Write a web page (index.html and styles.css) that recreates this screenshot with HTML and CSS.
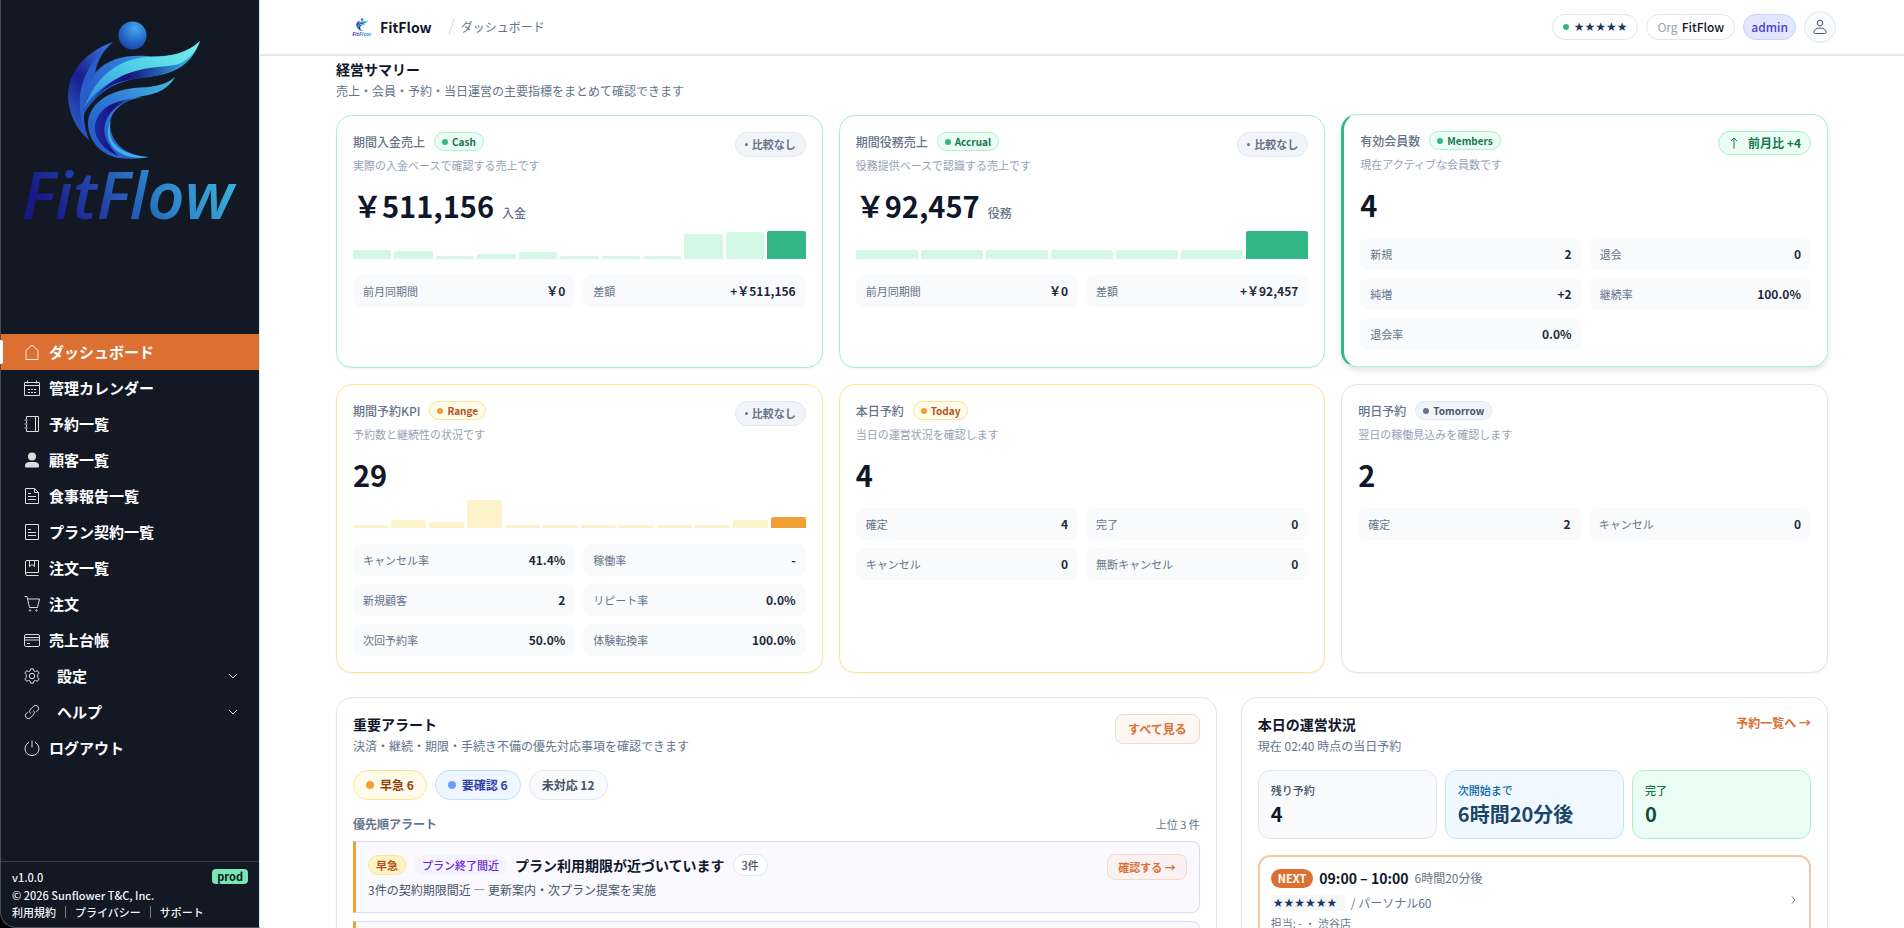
FILE: index.html
```html
<!DOCTYPE html>
<html lang="ja">
<head>
    <meta charset="UTF-8">
    <title>FitFlow | ダッシュボード</title>
    <link rel="stylesheet" href="styles.css">
</head>
<body>
<!-- 共通ロゴ -->
<svg class="defs" width="0" height="0" aria-hidden="true">
    <defs>
        <radialGradient id="g-head" cx="0.6" cy="0.25" r="0.8">
            <stop offset="0" stop-color="#45a8ea"/><stop offset="0.6" stop-color="#2468c8"/><stop offset="1" stop-color="#1c3fa8"/>
        </radialGradient>
        <linearGradient id="g-back" x1="0.8" y1="0" x2="0.3" y2="1">
            <stop offset="0" stop-color="#3478d8"/><stop offset="0.5" stop-color="#1a1c8c"/><stop offset="1" stop-color="#2a62c8"/>
        </linearGradient>
        <linearGradient id="g-mid" x1="0" y1="1" x2="1" y2="0">
            <stop offset="0" stop-color="#2450c0"/><stop offset="0.5" stop-color="#2f7ad6"/><stop offset="1" stop-color="#40c0e4"/>
        </linearGradient>
        <linearGradient id="g-light" x1="0" y1="1" x2="1" y2="0">
            <stop offset="0" stop-color="#2c88dc"/><stop offset="0.55" stop-color="#4fd2e6"/><stop offset="1" stop-color="#7cf0e8"/>
        </linearGradient>
        <linearGradient id="g-dark" x1="0" y1="0" x2="1" y2="0">
            <stop offset="0" stop-color="#1c2aa0"/><stop offset="0.4" stop-color="#16127c"/><stop offset="1" stop-color="#2f9ad8"/>
        </linearGradient>
        <linearGradient id="g-word" x1="0" y1="0.3" x2="1" y2="0">
            <stop offset="0" stop-color="#171a86"/><stop offset="0.25" stop-color="#2340a8"/><stop offset="0.55" stop-color="#2b86cc"/><stop offset="1" stop-color="#3fc0dc"/>
        </linearGradient>
    </defs>
    <symbol id="logo" viewBox="20 18 222 206" overflow="visible">
        <circle cx="132.500" cy="35.500" r="14" fill="url(#g-head)"/>
        <path fill="url(#g-back)" d="M113 42C82 53 67 75 68 98c1 17 9 32 21 42-5-13-6-27-5-38 2-11 6-20 11-29 2-12 8-23 18-31z"/>
        <path fill="#2a5ccc" d="M113 42C94 56 82 76 80 96c-1 12 1 26 4 34-1-20 3-40 11-57 2-12 8-23 18-31z"/>
        <path fill="url(#g-mid)" d="M95 73c14-15 30-18 52-17 22 1 39-2 53-15-7 20-20 30-40 34-26 4-55 4-76 39 1-15 5-30 11-41z"/>
        <path fill="url(#g-light)" d="M200 41c-13 13-32 16-53 16-24 2-49 14-63 51 12-20 32-32 60-36 24-3 46-6 56-31z"/>
        <path fill="url(#g-dark)" d="M92 102c16-24 38-31 58-34 15-2 25-2 32-5-8 9-22 13-39 15-24 2-38 8-51 24z"/>
        <path fill="url(#g-mid)" d="M175 77c-10 9-24 10-41 11-25 3-43 14-46 33-1 20 14 34 30 37 11 1 22 1 31-1-23-1-38-14-39-32 0-14 13-25 33-29 15-2 26-8 32-19z"/>
        <path fill="url(#g-dark)" d="M143 97c-28 3-44 9-48 28-2 13 10 26 24 31-14-12-17-25-13-35 4-12 16-20 37-24z"/>
        <path fill="#3fb0e6" d="M111 121c-6 20 8 34 38 36-22 4-42-7-41-25 0-4 1-8 3-11z"/>
        <text x="22" y="219" class="logo-word" fill="url(#g-word)">FitFlow</text>
    </symbol>
</svg>

<div class="app">
    <aside class="sidebar">
        <a class="sidebar-logo" href="#" aria-label="FitFlow"><svg viewBox="0 0 222 206"><use href="#logo" width="222" height="206"/></svg></a>
        <nav class="nav">
            <a class="nav-item active" href="#">
                <svg viewBox="0 0 16 16"><path d="M2 6.500 8 1l6 5.500v9H2z"/></svg>ダッシュボード</a>
            <a class="nav-item" href="#">
                <svg viewBox="0 0 16 16"><path d="M.5 2.500h15v13H.5zM.5 5.500h15M3.500.5v3M12.500.5v3"/><path d="M4 9.500h2M7 9.500h2M10 9.500h2M4 12.500h2M7 12.500h2M10 12.500h2"/></svg>管理カレンダー</a>
            <a class="nav-item" href="#">
                <svg viewBox="0 0 16 16"><path d="M2.500 3V.5h12v15h-12V13M11.500.5v15M2.500 5v2M2.500 9v2M.5 4h3M.5 8h3M.5 12h3"/></svg>予約一覧</a>
            <a class="nav-item" href="#">
                <svg viewBox="0 0 16 16"><g class="solid"><circle cx="8" cy="4.500" r="4"/><path d="M1 14c0-3 2-4 5-4h4c3 0 5 1 5 4 0 1-.5 1.500-1.500 1.500h-11C1.500 15.500 1 15 1 14z"/></g></svg>顧客一覧</a>
            <a class="nav-item" href="#">
                <svg viewBox="0 0 16 16"><path d="M1.500.5h9l4 4v11h-13zM10.500.5v4h4M4 5.500h3M4 8.500h8M4 11.500h8"/></svg>食事報告一覧</a>
            <a class="nav-item" href="#">
                <svg viewBox="0 0 16 16"><path d="M1.500.5h13v15h-13zM4 5.500h3M4 8.500h8M4 11.500h8"/></svg>プラン契約一覧</a>
            <a class="nav-item" href="#">
                <svg viewBox="0 0 16 16"><path d="M14.500 12.500v-12H3a1.500 1.500 0 0 0-1.500 1.500v12A1.500 1.500 0 0 0 3 15.500h11.500M14.500 12.500H3a1.500 1.500 0 0 0-1.500 1.500M5.500.5v6L8 4.500l2.500 2v-6"/></svg>注文一覧</a>
            <a class="nav-item" href="#">
                <svg viewBox="0 0 16 16"><path d="M.5.5h2.500l2.500 11h8l2-8.500H3.500"/><circle cx="6" cy="14.500" r=".7"/><circle cx="12.500" cy="14.500" r=".7"/></svg>注文</a>
            <a class="nav-item" href="#">
                <svg viewBox="0 0 16 16"><rect x=".5" y="2.500" width="15" height="12" rx="1.500"/><path d="M.5 5.500h15M.5 8h15M3 11.500h3"/></svg>売上台帳</a>
            <button class="nav-item" type="button">
                <svg viewBox="0 0 16 16"><circle cx="8" cy="8" r="2.700"/><path d="M6.600.8h2.800l.5 2 1.500.8 2-.9 1.700 2.400-1.400 1.600v2.600l1.400 1.600-1.700 2.400-2-.9-1.500.8-.5 2H6.600l-.5-2-1.500-.8-2 .9L.9 10.900l1.400-1.600V6.700L.9 5.100l1.700-2.400 2 .9 1.500-.8z"/></svg><span class="nav-group">設定</span>
                <svg class="chev" viewBox="0 0 12 12"><path d="M2 4l4 4 4-4"/></svg></button>
            <button class="nav-item" type="button">
                <svg viewBox="0 0 16 16"><path d="M6.500 9.500a3 3 0 0 1 0-4.200l3.300-3.300a3 3 0 0 1 4.200 4.200l-2 2M9.500 6.500a3 3 0 0 1 0 4.200l-3.300 3.300A3 3 0 0 1 2 9.800l2-2"/></svg><span class="nav-group">ヘルプ</span>
                <svg class="chev" viewBox="0 0 12 12"><path d="M2 4l4 4 4-4"/></svg></button>
            <a class="nav-item" href="#">
                <svg viewBox="0 0 16 16"><path d="M8 .5v7M5 2.300a7 7 0 1 0 6 0"/></svg>ログアウト</a>
        </nav>
        <footer class="sidebar-foot">
            <div class="version">v1.0.0<span class="env">prod</span></div>
            <div>© 2026 Sunflower T&amp;C, Inc.</div>
            <div class="links"><a href="#">利用規約</a><i></i><a href="#">プライバシー</a><i></i><a href="#">サポート</a></div>
        </footer>
    </aside>

    <main class="main">
        <header class="topbar">
            <div class="topbar-inner">
                <a class="brand" href="#"><svg viewBox="0 0 222 206"><use href="#logo" width="222" height="206"/></svg>FitFlow</a>
                <svg class="slash" viewBox="0 0 8 18"><path d="M7 1 2 17"/></svg>
                <span class="crumb">ダッシュボード</span>
                <div class="user">
                    <span class="chip"><span class="dot green"></span><span class="mask">★★★★★</span></span>
                    <span class="chip"><span class="muted">Org</span> <b>FitFlow</b></span>
                    <span class="chip role">admin</span>
                    <button class="avatar" type="button" aria-label="アカウント"><svg viewBox="0 0 16 16"><circle cx="8" cy="4" r="2.800"/><path d="M3.500 14.500c-1.300 0-2-.8-1.500-2.200C2.700 10.300 4.800 9 8 9s5.300 1.300 6 3.300c.5 1.400-.2 2.200-1.500 2.200z"/></svg></button>
                </div>
            </div>
        </header>

        <div class="content">
            <section>
                <h2>経営サマリー</h2>
                <p class="lead">売上・会員・予約・当日運営の主要指標をまとめて確認できます</p>

                <div class="kpis">
                    <article class="card c-green">
                        <div class="card-head">
                            <h3>期間入金売上</h3><span class="badge green"><span class="dot green"></span>Cash</span>
                            <span class="pill"><i></i>比較なし</span>
                        </div>
                        <p class="note">実際の入金ベースで確認する売上です</p>
                        <div class="value">￥511,156<small>入金</small></div>
                        <div class="bars green">
                            <span style="height:9px"></span><span style="height:8px"></span><span style="height:3px"></span><span style="height:5px"></span><span style="height:7px"></span><span style="height:3px"></span><span style="height:3px"></span><span style="height:3px"></span><span style="height:25px"></span><span style="height:27px"></span><span style="height:28px"></span>
                        </div>
                        <dl class="stats">
                            <div><dt>前月同期間</dt><dd>￥0</dd></div>
                            <div><dt>差額</dt><dd>+￥511,156</dd></div>
                        </dl>
                    </article>

                    <article class="card c-green">
                        <div class="card-head">
                            <h3>期間役務売上</h3><span class="badge green"><span class="dot green"></span>Accrual</span>
                            <span class="pill"><i></i>比較なし</span>
                        </div>
                        <p class="note">役務提供ベースで認識する売上です</p>
                        <div class="value">￥92,457<small>役務</small></div>
                        <div class="bars green">
                            <span style="height:9px"></span><span style="height:9px"></span><span style="height:9px"></span><span style="height:9px"></span><span style="height:9px"></span><span style="height:9px"></span><span style="height:28px"></span>
                        </div>
                        <dl class="stats">
                            <div><dt>前月同期間</dt><dd>￥0</dd></div>
                            <div><dt>差額</dt><dd>+￥92,457</dd></div>
                        </dl>
                    </article>

                    <article class="card c-green raised">
                        <div class="card-head">
                            <h3>有効会員数</h3><span class="badge green"><span class="dot green"></span>Members</span>
                            <span class="pill up"><svg viewBox="0 0 12 12"><path d="M6 11.500V1M3 4l3-3 3 3"/></svg>前月比 +4</span>
                        </div>
                        <p class="note">現在アクティブな会員数です</p>
                        <div class="value">4</div>
                        <dl class="stats">
                            <div><dt>新規</dt><dd>2</dd></div>
                            <div><dt>退会</dt><dd>0</dd></div>
                            <div><dt>純増</dt><dd>+2</dd></div>
                            <div><dt>継続率</dt><dd>100.0%</dd></div>
                            <div><dt>退会率</dt><dd>0.0%</dd></div>
                        </dl>
                    </article>

                    <article class="card c-amber">
                        <div class="card-head">
                            <h3>期間予約KPI</h3><span class="badge amber"><span class="dot amber"></span>Range</span>
                            <span class="pill"><i></i>比較なし</span>
                        </div>
                        <p class="note">予約数と継続性の状況です</p>
                        <div class="value">29</div>
                        <div class="bars amber">
                            <span style="height:3px"></span><span style="height:8px"></span><span style="height:6px"></span><span style="height:28px"></span><span style="height:3px"></span><span style="height:3px"></span><span style="height:3px"></span><span style="height:3px"></span><span style="height:3px"></span><span style="height:3px"></span><span style="height:8px"></span><span style="height:11px"></span>
                        </div>
                        <dl class="stats">
                            <div><dt>キャンセル率</dt><dd>41.4%</dd></div>
                            <div><dt>稼働率</dt><dd>-</dd></div>
                            <div><dt>新規顧客</dt><dd>2</dd></div>
                            <div><dt>リピート率</dt><dd>0.0%</dd></div>
                            <div><dt>次回予約率</dt><dd>50.0%</dd></div>
                            <div><dt>体験転換率</dt><dd>100.0%</dd></div>
                        </dl>
                    </article>

                    <article class="card c-amber">
                        <div class="card-head">
                            <h3>本日予約</h3><span class="badge amber"><span class="dot amber"></span>Today</span>
                        </div>
                        <p class="note">当日の運営状況を確認します</p>
                        <div class="value">4</div>
                        <dl class="stats">
                            <div><dt>確定</dt><dd>4</dd></div>
                            <div><dt>完了</dt><dd>0</dd></div>
                            <div><dt>キャンセル</dt><dd>0</dd></div>
                            <div><dt>無断キャンセル</dt><dd>0</dd></div>
                        </dl>
                    </article>

                    <article class="card">
                        <div class="card-head">
                            <h3>明日予約</h3><span class="badge"><span class="dot"></span>Tomorrow</span>
                        </div>
                        <p class="note">翌日の稼働見込みを確認します</p>
                        <div class="value">2</div>
                        <dl class="stats">
                            <div><dt>確定</dt><dd>2</dd></div>
                            <div><dt>キャンセル</dt><dd>0</dd></div>
                        </dl>
                    </article>
                </div>
            </section>

            <div class="panels">
                <section class="card panel">
                    <div class="panel-head">
                        <div>
                            <h2>重要アラート</h2>
                            <p class="lead">決済・継続・期限・手続き不備の優先対応事項を確認できます</p>
                        </div>
                        <button class="btn" type="button">すべて見る</button>
                    </div>
                    <div class="counts">
                        <span class="count amber"><span class="dot amber"></span>早急 6</span>
                        <span class="count blue"><span class="dot blue"></span>要確認 6</span>
                        <span class="count">未対応 12</span>
                    </div>
                    <div class="sub-head"><h3>優先順アラート</h3><span>上位 3 件</span></div>
                    <div class="alerts">
                        <div class="alert">
                            <div class="alert-body">
                                <div class="alert-title">
                                    <span class="tag amber">早急</span><span class="tag purple">プラン終了間近</span>
                                    <strong>プラン利用期限が近づいています</strong><span class="tag">3件</span>
                                </div>
                                <p>3件の契約期限間近 — 更新案内・次プラン提案を実施</p>
                            </div>
                            <button class="btn small" type="button">確認する →</button>
                        </div>
                        <div class="alert"></div>
                    </div>
                </section>

                <section class="card panel">
                    <div class="panel-head">
                        <div>
                            <h2>本日の運営状況</h2>
                            <p class="lead">現在 02:40 時点の当日予約</p>
                        </div>
                        <a class="more" href="#">予約一覧へ →</a>
                    </div>
                    <div class="tiles">
                        <div class="tile"><span>残り予約</span><b>4</b></div>
                        <div class="tile sky"><span>次開始まで</span><b>6時間20分後</b></div>
                        <div class="tile green"><span>完了</span><b>0</b></div>
                    </div>
                    <a class="next" href="#">
                        <div>
                            <div class="next-time"><span class="next-tag">NEXT</span><strong>09:00 – 10:00</strong><span>6時間20分後</span></div>
                            <div class="next-name"><span class="mask">★★★★★★</span><span>/ パーソナル60</span></div>
                            <div class="next-staff">担当: - ‧ 渋谷店</div>
                        </div>
                        <svg class="chev" viewBox="0 0 10 10"><path d="M4 1.500 7 5 4 8.500"/></svg>
                    </a>
                </section>
            </div>
        </div>
    </main>
</div>
</body>
</html>
```
FILE: styles.css
```css
*{
    box-sizing: border-box;
    margin: 0;
    padding: 0;
}
body{
    height: 100vh;
    overflow: hidden;
    background: #000;
    color: #0f172a;
    font: 12px/18px "Noto Sans CJK JP", sans-serif;
}
a{
    color: inherit;
    text-decoration: none;
}
button{
    font: inherit;
    color: inherit;
    cursor: pointer;
}
svg{
    display: block;
    fill: none;
    stroke: currentColor;
}
.defs{
    position: absolute;
}
.logo-word{
    font: italic 600 65px "Open Sans", sans-serif;
}
.app{
    display: flex;
    height: 100%;
}

/* サイドバー */
.sidebar{
    display: flex;
    flex-direction: column;
    flex: none;
    width: 260px;
    background: #121824;
    border: solid #4a505a;
    border-width: 0 1px 1px 1px;
    border-right-color: #e3e7ee;
    border-radius: 0 0 0 16px;
    color: #fff;
}
.sidebar-logo{
    height: 334px;
    padding: 18px 17px 0 19px;
}
.sidebar-logo svg, .brand svg{
    stroke: none;
    overflow: visible;
}
.nav{
    flex: 1;
}
.nav-item{
    display: flex;
    align-items: center;
    gap: 9px;
    width: 100%;
    height: 36px;
    padding: 0 20px 0 23px;
    border: 0;
    background: none;
    font-size: 15px;
    font-weight: 600;
    text-align: left;
}
.nav-item svg{
    width: 16px;
    height: 16px;
    opacity: .85;
}
.nav-item .solid{
    fill: currentColor;
    stroke: none;
}
.nav-item.active{
    position: relative;
    background: #dc7032;
}
.nav-item.active::before{
    content: "";
    position: absolute;
    left: -1px;
    top: 6px;
    width: 3px;
    height: 24px;
    background: #fff;
    border-radius: 0 2px 2px 0;
}
.nav-group{
    flex: 1;
    padding-left: 8px;
}
.nav-item .chev{
    width: 12px;
    height: 12px;
}
.sidebar-foot{
    padding: 5px 11px 7px;
    border-top: 1px solid #3a404b;
    font-size: 11px;
    font-weight: 500;
    color: #f1f3f6;
}
.version{
    display: flex;
    justify-content: space-between;
    align-items: center;
    height: 19px;
}
.env{
    padding: 0 5px;
    border-radius: 4px;
    background: #78e6b8;
    color: #0b1a14;
    line-height: 15px;
    font-weight: 600;
}
.links{
    display: flex;
    align-items: center;
    gap: 9px;
    line-height: 16px;
}
.links i{
    width: 1px;
    height: 12px;
    background: #747a84;
}

/* ヘッダー */
.main{
    flex: 1;
    min-width: 0;
    overflow: hidden;
    background: #fff;
}
.topbar{
    border-bottom: 2px solid #e3e7ee;
}
.topbar-inner{
    display: flex;
    align-items: center;
    max-width: 1508px;
    height: 54px;
    margin: 0 auto;
    padding-left: 24px;
}
.brand{
    display: flex;
    align-items: center;
    gap: 8px;
    font-size: 14px;
    font-weight: 600;
}
.brand svg{
    width: 20px;
}
.slash{
    width: 8px;
    height: 18px;
    margin: 0 6px 0 15px;
    color: #cbd5e1;
}
.crumb{
    color: #64748b;
}
.user{
    display: flex;
    align-items: center;
    gap: 8px;
    margin-left: auto;
}
.chip{
    display: flex;
    align-items: center;
    gap: 4px;
    height: 26px;
    padding: 0 10px;
    border: 1px solid #e2e5ea;
    border-radius: 13px;
}
.chip b, .role{
    font-weight: 500;
}
.chip .muted{
    color: #94a3b8;
}
.chip.role{
    padding: 0 7px;
    background: #e0e7ff;
    border-color: #c7d2fe;
    color: #4f3cc9;
}
.mask{
    color: #1e3563;
    font: 12px/16px "DejaVu Sans", sans-serif;
}
.chip .mask{
    margin-left: 1px;
}
.avatar{
    display: grid;
    place-items: center;
    width: 32px;
    height: 32px;
    border: 1px solid #e2e8f0;
    border-radius: 50%;
    background: #f8fafc;
    color: #475569;
}
.avatar svg{
    width: 16px;
    height: 16px;
}
.dot{
    flex: none;
    width: 6px;
    height: 6px;
    border-radius: 50%;
    background: #64748b;
}
.dot.green{
    background: #33b787;
}
.dot.amber{
    background: #f0a035;
}
.dot.blue{
    background: #6aa3f6;
}

/* 経営サマリー */
.content{
    max-width: 1492px;
    margin: 0 auto;
    padding-top: 3px;
}
h2{
    font-size: 14px;
    line-height: 20px;
    font-weight: 600;
}
.lead{
    margin-top: 3px;
    color: #64748b;
}
.kpis{
    display: grid;
    grid-template-columns: repeat(3, 1fr);
    gap: 16px;
    margin-top: 15px;
}
.card{
    min-width: 0;
    padding: 16px;
    border: 1px solid #e2e5ef;
    border-radius: 16px;
    background: #fff;
    box-shadow: 0 1px 2px rgba(15, 23, 42, .05);
}
.c-green{
    border-color: #a7f0d0;
}
.c-amber{
    border-color: #fbe692;
}
/* ホバー中のカード */
.raised{
    border-left: 3px solid #33b787;
    box-shadow: 0 3px 6px rgba(15, 23, 42, .12);
    transform: translateY(-1px);
}
.card-head{
    display: flex;
    align-items: flex-start;
    gap: 9px;
    height: 20px;
}
.card-head h3{
    font-size: 12px;
    line-height: 20px;
    font-weight: 500;
    color: #64748b;
}
.badge{
    display: flex;
    align-items: center;
    gap: 4px;
    padding: 0 7px;
    border: 1px solid #e2e8f0;
    border-radius: 10px;
    background: #f1f5f9;
    color: #475569;
    font-size: 10px;
    line-height: 17px;
    font-weight: 600;
}
.badge.green{
    background: #ecfdf5;
    border-color: #a7f3d0;
    color: #14784f;
}
.badge.amber{
    background: #fffbeb;
    border-color: #fde68a;
    color: #b4531c;
}
.pill{
    display: flex;
    align-items: center;
    gap: 4px;
    margin-left: auto;
    padding: 0 9px;
    border: 1px solid #e2e8f0;
    border-radius: 13px;
    background: #f1f5f9;
    color: #64748b;
    font-size: 11px;
    line-height: 23px;
    font-weight: 600;
}
.pill i{
    width: 3px;
    height: 3px;
    border-radius: 50%;
    background: #64748b;
}
.pill.up{
    gap: 8px;
    border-color: #a7f3d0;
    background: #ecfdf5;
    color: #14784f;
    font-size: 12px;
    line-height: 22px;
}
.pill.up svg{
    width: 12px;
    height: 12px;
}
.note{
    margin-top: 5px;
    font-size: 11px;
    line-height: 17px;
    color: #94a3b8;
}
.value{
    margin-top: 11px;
    font-size: 29px;
    line-height: 40px;
    font-weight: 600;
}
.value small{
    margin-left: 8px;
    font-size: 12px;
    line-height: 18px;
    font-weight: 500;
    color: #64748b;
}
.bars{
    display: flex;
    align-items: flex-end;
    gap: 3px;
    height: 28px;
    margin: 6px 0 16px;
}
.bars span{
    flex: 1;
    border-radius: 2px 2px 0 0;
}
.bars.green span{
    background: #d3f9e5;
}
.bars.amber span{
    background: #fcf3ca;
}
.bars.green span:last-child{
    background: #33b787;
}
.bars.amber span:last-child{
    background: #f0a035;
}
.stats{
    display: grid;
    grid-template-columns: 1fr 1fr;
    gap: 8px;
}
.value + .stats{
    margin-top: 14px;
}
.stats div{
    display: flex;
    justify-content: space-between;
    padding: 0 10px;
    border-radius: 8px;
    background: #f8fafc;
    line-height: 32px;
}
.stats dt{
    font-size: 11px;
    color: #64748b;
}
.stats dd{
    font-weight: 600;
    color: #1e293b;
}

/* 下段パネル */
.panels{
    display: grid;
    grid-template-columns: 3fr 2fr;
    gap: 24px;
    margin-top: 24px;
}
.panel-head{
    display: flex;
    justify-content: space-between;
    align-items: flex-start;
    margin-bottom: 15px;
}
.btn{
    height: 30px;
    padding: 0 12px;
    border: 1px solid #f8d8c4;
    border-radius: 8px;
    background: #fdf6f2;
    color: #dc7032;
    font-weight: 600;
}
.btn.small{
    height: 26px;
    padding: 0 10px;
    font-size: 11px;
    background: #f9f1f4;
}
.more{
    color: #dc7032;
    font-weight: 600;
}
.counts{
    display: flex;
    gap: 8px;
}
.count{
    display: flex;
    align-items: center;
    gap: 6px;
    padding: 0 12px;
    border: 1px solid #e2e8f0;
    border-radius: 15px;
    background: #f8fafc;
    color: #475569;
    line-height: 28px;
    font-weight: 600;
}
.count .dot{
    width: 8px;
    height: 8px;
}
.count.amber{
    background: #fffbeb;
    border-color: #fde68a;
    color: #92400e;
}
.count.blue{
    background: #eff6ff;
    border-color: #bfdbfe;
    color: #2f3fa8;
}
.sub-head{
    display: flex;
    justify-content: space-between;
    margin: 14px 0 7px;
    font-size: 11px;
    line-height: 20px;
    color: #64748b;
}
.sub-head h3{
    font-size: 12px;
    font-weight: 600;
}
.alerts{
    display: grid;
    gap: 8px;
}
.alert{
    display: flex;
    justify-content: space-between;
    align-items: flex-start;
    min-height: 72px;
    padding: 12px;
    border: 1px solid #ddd6fe;
    border-left: 3px solid #f0a035;
    border-radius: 0 8px 8px 0;
    background: #faf9ff;
}
.alert-title{
    display: flex;
    align-items: center;
    gap: 8px;
    height: 22px;
    margin-bottom: 5px;
}
.alert-title strong{
    font-size: 14px;
    font-weight: 600;
}
.alert p{
    color: #475569;
}
.tag{
    padding: 0 8px;
    border: 1px solid #e2e8f0;
    border-radius: 11px;
    background: #fff;
    color: #475569;
    font-size: 11px;
    line-height: 20px;
    font-weight: 500;
}
.tag.amber, .tag.purple{
    padding: 0 7px;
    line-height: 18px;
}
.tag.amber{
    background: #fef3c7;
    border-color: #fde68a;
    color: #b4531c;
    font-weight: 600;
}
.tag.purple{
    background: #f5f3ff;
    border-color: #f5f3ff;
    color: #6d28d9;
}
.tiles{
    display: grid;
    grid-template-columns: repeat(3, 1fr);
    gap: 8px;
}
.tile{
    padding: 10px 12px;
    border: 1px solid #e2e5ef;
    border-radius: 12px;
    background: #f8fafc;
}
.tile span{
    display: block;
    color: #475569;
    font-size: 11px;
    font-weight: 500;
}
.tile b{
    display: block;
    font-size: 20px;
    line-height: 29px;
    font-weight: 600;
}
.tile.sky{
    background: #f0f9ff;
    border-color: #bae6fd;
}
.tile.sky span{
    color: #0b68a8;
}
.tile.sky b{
    color: #1a4668;
}
.tile.green{
    background: #ecfdf5;
    border-color: #a7f3d0;
}
.tile.green span{
    color: #14784f;
}
.tile.green b{
    color: #144d3a;
}
.next{
    display: flex;
    justify-content: space-between;
    align-items: center;
    margin-top: 16px;
    padding: 11px;
    border: 2px solid #f3c6a9;
    border-radius: 12px;
    color: #64748b;
}
.next-time{
    display: flex;
    align-items: center;
    gap: 6px;
    height: 20px;
}
.next-time strong{
    font-size: 14px;
    font-weight: 600;
    color: #0f172a;
}
.next-tag{
    padding: 0 7px;
    border-radius: 10px;
    background: #dc7032;
    color: #fff;
    font-size: 11px;
    line-height: 19px;
    font-weight: 700;
}
.next-name{
    display: flex;
    align-items: center;
    gap: 6px;
    height: 22px;
    margin-top: 4px;
}
.next-name .mask{
    width: 74px;
    padding-left: 2px;
    background: #f6f7f9;
}
.next-staff{
    font-size: 11px;
}
.next .chev{
    width: 10px;
    height: 10px;
}
```
